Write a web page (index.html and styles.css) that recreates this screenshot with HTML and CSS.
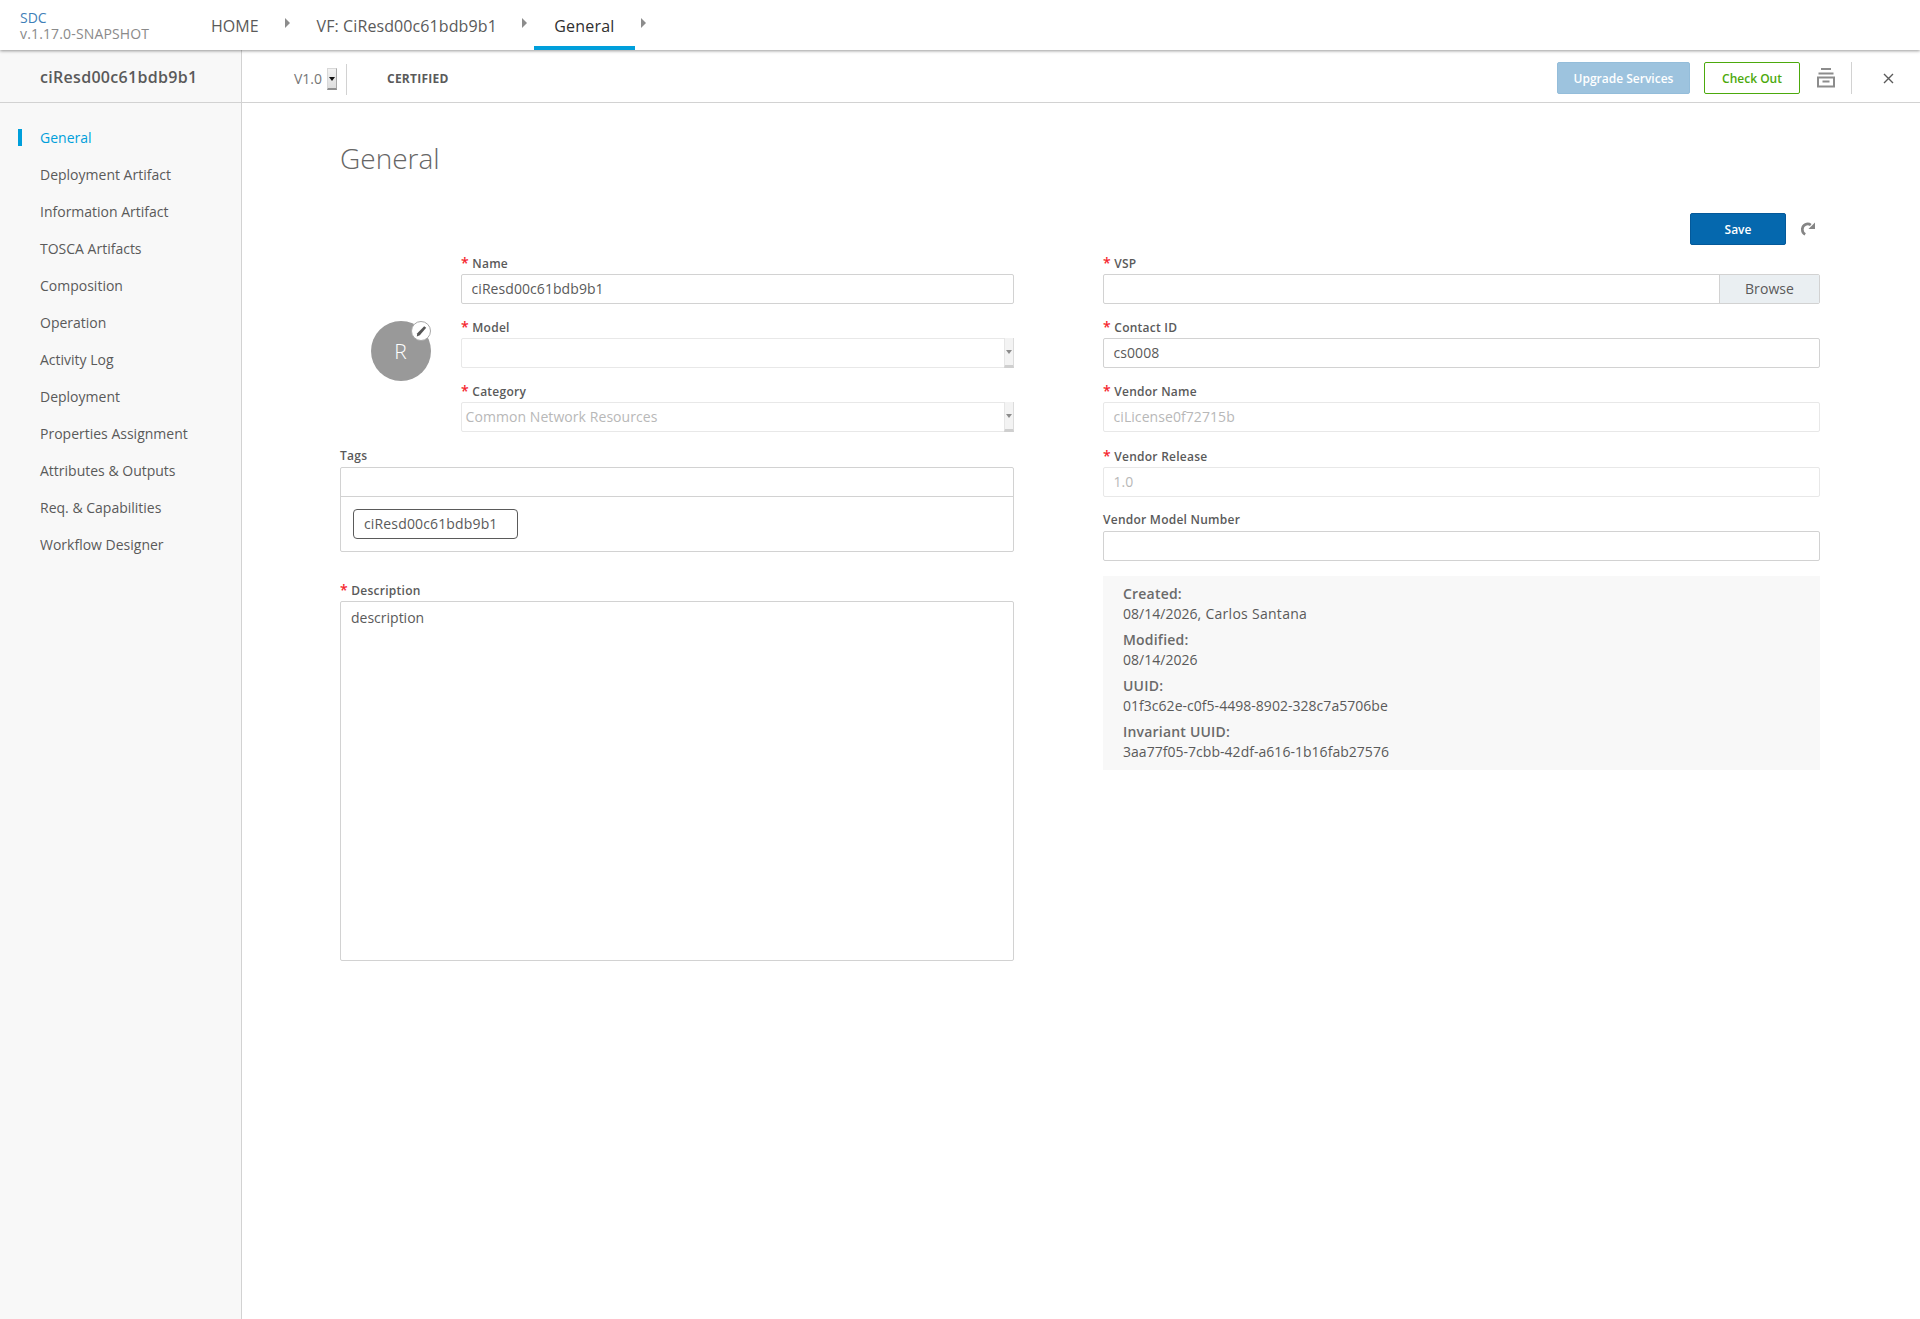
FILE: index.html
```html
<!DOCTYPE html>
<html lang="en">
<head>
<meta charset="utf-8">
<title>SDC</title>
<link rel="stylesheet" href="styles.css">
</head>
<body>
<header class="topbar">
  <div class="brand"><div class="brand-name">SDC</div><div class="brand-ver">v.1.17.0-SNAPSHOT</div></div>
  <nav class="crumbs">
    <a class="crumb crumb-home">HOME</a><span class="tri"></span>
    <a class="crumb crumb-vf">VF: CiResd00c61bdb9b1</a><span class="tri"></span>
    <a class="crumb crumb-active">General</a><span class="tri"></span>
  </nav>
</header>
<div class="shell">
  <aside class="side">
    <div class="side-title">ciResd00c61bdb9b1</div>
    <ul class="menu">
      <li class="menu-item active">General</li>
      <li class="menu-item">Deployment Artifact</li>
      <li class="menu-item">Information Artifact</li>
      <li class="menu-item">TOSCA Artifacts</li>
      <li class="menu-item">Composition</li>
      <li class="menu-item">Operation</li>
      <li class="menu-item">Activity Log</li>
      <li class="menu-item">Deployment</li>
      <li class="menu-item">Properties Assignment</li>
      <li class="menu-item">Attributes &amp; Outputs</li>
      <li class="menu-item">Req. &amp; Capabilities</li>
      <li class="menu-item">Workflow Designer</li>
    </ul>
  </aside>
  <main class="main">
    <div class="subbar">
      <div class="version"><span>V1.0</span><span class="ver-arrow"></span></div>
      <div class="state">CERTIFIED</div>
      <div class="actions">
        <button class="btn btn-upgrade">Upgrade Services</button>
        <button class="btn btn-checkout">Check Out</button>
        <svg class="ico-archive" width="18" height="20" viewBox="0 0 18 20"><path d="M4 1h10M1.500 5.500h15M1 9.500h16v9H1zM5.500 13.500h7" fill="none" stroke="#8c8c8c" stroke-width="2"/></svg>
        <span class="act-div"></span>
        <svg class="ico-close" width="11" height="11" viewBox="0 0 11 11"><path d="M1 1l9 9M10 1l-9 9" stroke="#5a5a5a" stroke-width="1.400" fill="none"/></svg>
      </div>
    </div>
    <div class="page">
      <h1 class="title">General</h1>
      <div class="save-row">
        <button class="btn btn-save">Save</button>
        <svg class="ico-redo" width="14" height="14" viewBox="0 0 15 15"><path d="M10.500 3.300A5.600 5.600 0 0 0 1.500 7.500a5.800 5.800 0 0 0 3 5.800" fill="none" stroke="#858585" stroke-width="2.800"/><path d="M15 .5v7H8z" fill="#858585"/></svg>
      </div>
      <div class="form">
        <div class="col">
          <div class="identity">
            <div class="avatar-wrap">
              <div class="avatar">R</div>
              <div class="avatar-edit"><svg width="12" height="12" viewBox="0 0 12 12"><path d="M9.200 1.200l2 1.600L4.800 10.300 1.800 11.500l.5-3.200z" fill="#555"/></svg></div>
            </div>
            <div class="identity-fields">
              <div class="field"><label class="label"><span class="req">*</span> Name</label><div class="input">ciResd00c61bdb9b1</div></div>
              <div class="field"><label class="label"><span class="req">*</span> Model</label><div class="input input-light select"><span class="sel-arrow"></span></div></div>
              <div class="field field-gap"><label class="label"><span class="req">*</span> Category</label><div class="input input-light select sel-text">Common Network Resources<span class="sel-arrow"></span></div></div>
            </div>
          </div>
          <div class="field">
            <label class="label">Tags</label>
            <div class="tags">
              <div class="tags-input"></div>
              <div class="tags-list"><span class="tag">ciResd00c61bdb9b1</span></div>
            </div>
          </div>
          <div class="field field-desc">
            <label class="label"><span class="req">*</span> Description</label>
            <div class="textarea">description</div>
          </div>
        </div>
        <div class="col">
          <div class="field"><label class="label"><span class="req">*</span> VSP</label><div class="input input-browse"><span class="browse">Browse</span></div></div>
          <div class="field"><label class="label"><span class="req">*</span> Contact ID</label><div class="input">cs0008</div></div>
          <div class="field field-gap"><label class="label"><span class="req">*</span> Vendor Name</label><div class="input input-light disabled">ciLicense0f72715b</div></div>
          <div class="field"><label class="label"><span class="req">*</span> Vendor Release</label><div class="input input-light disabled">1.0</div></div>
          <div class="field"><label class="label">Vendor Model Number</label><div class="input"></div></div>
          <div class="info">
            <div class="info-group"><div class="info-key">Created:</div><div class="info-val">08/14/2026<span class="info-author">, Carlos Santana</span></div></div>
            <div class="info-group"><div class="info-key">Modified:</div><div class="info-val">08/14/2026</div></div>
            <div class="info-group"><div class="info-key">UUID:</div><div class="info-val">01f3c62e-c0f5-4498-8902-328c7a5706be</div></div>
            <div class="info-group"><div class="info-key">Invariant UUID:</div><div class="info-val">3aa77f05-7cbb-42df-a616-1b16fab27576</div></div>
          </div>
        </div>
      </div>
    </div>
  </main>
</div>
</body>
</html>
```
FILE: styles.css
```css
* { box-sizing: border-box; }
html, body { margin: 0; padding: 0; height: 100%; }
body { font-family: "Open Sans", sans-serif; color: #5a5a5a; background: #fff; font-size: 14px; height: 1319px; overflow: hidden; display: flex; flex-direction: column; }

.topbar { height: 50px; flex: none; display: flex; background: #fff; box-shadow: 0 1px 3px rgba(0,0,0,.4); position: relative; z-index: 2; }
.brand { width: 211px; padding: 10px 0 0 20px; font-size: 14px; line-height: 15px; flex: none; }
.brand-name { color: #3f7fb8; font-size: 14px; }
.brand-ver { color: #8a8a8a; margin-top: 1px; letter-spacing: .15px; }
.crumbs { display: flex; align-items: stretch; }
.crumb { font-size: 16px; line-height: 52px; color: #5a5a5a; height: 50px; white-space: nowrap; }
.crumb-vf { letter-spacing: .1px; }
.crumb-active { color: #2f2f2f; width: 101px; text-align: center; border-bottom: 4px solid #009fdb; letter-spacing: .2px; }
.tri { width: 0; height: 0; border-left: 5px solid #8c8c8c; border-top: 5px solid transparent; border-bottom: 5px solid transparent; margin: 18px 0 0 26px; }
.crumbs .tri:nth-child(2) { margin-right: 27px; }
.crumbs .tri:nth-child(4) { margin-left: 25px; margin-right: 7px; }
.crumbs .tri:nth-child(6) { margin-left: 6px; }

.shell { flex: 1; display: flex; min-height: 0; }
.side { width: 242px; flex: none; background: #f8f8f8; border-right: 1px solid #d2d2d2; }
.side-title { height: 53px; line-height: 47px; padding: 4px 0 0 40px; font-size: 16px; font-weight: 600; letter-spacing: .3px; border-bottom: 1px solid #d2d2d2; }
.menu { list-style: none; margin: 0; padding: 16px 0 0 0; }
.menu-item { height: 37px; line-height: 37px; padding-left: 40px; font-size: 14px; color: #5a5a5a; position: relative; }
.menu-item.active { color: #009fdb; }
.menu-item.active::before { content: ""; position: absolute; left: 18px; top: 10px; width: 4px; height: 17px; background: #009fdb; }

.main { flex: 1; min-width: 0; display: flex; flex-direction: column; }
.subbar { height: 53px; flex: none; display: flex; align-items: center; border-bottom: 1px solid #d2d2d2; padding: 4px 0 0 52px; }
.version { display: flex; align-items: center; width: 53px; height: 31px; margin-top: 3px; padding-bottom: 2px; font-size: 14px; color: #767676; border-right: 1px solid #d2d2d2; gap: 5px; }
.ver-arrow { width: 10px; height: 22px; background: linear-gradient(#f2f2f2, #dedede); border: 1px solid #d8d8d8; border-right-color: #a8a8a8; border-bottom: 2px solid #8f8f8f; position: relative; }
.ver-arrow::after { content: ""; position: absolute; left: 1px; top: 8px; border-top: 4px solid #111; border-left: 3px solid transparent; border-right: 3px solid transparent; }
.state { margin-left: 40px; font-size: 12px; font-weight: 700; letter-spacing: .25px; color: #5a5a5a; }
.actions { margin-left: auto; display: flex; align-items: center; height: 32px; }
.btn { font-family: inherit; font-size: 12px; font-weight: 600; height: 32px; border-radius: 2px; padding: 0; cursor: pointer; }
.btn-upgrade { width: 133px; background: #9dc3de; border: 1px solid #94bdda; color: #fff; margin-right: 14px; }
.btn-checkout { width: 96px; background: #fff; border: 1px solid #4ca90c; color: #4ca90c; margin-right: 17px; }
.ico-archive { flex: none; margin-right: 16px; }
.act-div { width: 1px; height: 32px; background: #d2d2d2; margin-right: 31px; }
.ico-close { flex: none; margin-right: 26px; }

.page { flex: 1; padding: 0 100px 0 98px; }
.title { font-size: 28px; font-weight: 300; color: #666; margin: 0; height: 39px; line-height: 39px; margin-top: 36px; }
.save-row { display: flex; justify-content: flex-end; align-items: center; height: 32px; margin-top: 35px; padding-right: 5px; }
.btn-save { width: 96px; background: #0568ae; border: 1px solid #04599a; color: #fff; margin-right: 15px; }
.ico-redo { flex: none; }
.form { display: grid; grid-template-columns: 674px 717px; column-gap: 89px; margin-top: 9px; }
.col { min-width: 0; }
.identity { display: flex; }
.avatar-wrap { width: 121px; flex: none; position: relative; padding: 67px 0 0 31px; }
.avatar { width: 60px; height: 60px; border-radius: 50%; background: #999; color: #fff; font-size: 21px; font-weight: 300; text-align: center; line-height: 60px; padding-right: 1px; }
.avatar-edit { position: absolute; left: 71px; top: 67px; width: 20px; height: 20px; border-radius: 50%; background: #fff; border: 1px solid #a8a8a8; display: flex; align-items: center; justify-content: center; }
.identity-fields { flex: 1; min-width: 0; }
.field { margin-bottom: 14px; }
.field-gap { margin-bottom: 15px; }
.field-desc { margin-top: 29px; }
.label { display: block; height: 18px; line-height: 17px; font-size: 12px; font-weight: 600; letter-spacing: .25px; margin-bottom: 2px; color: #5a5a5a; }
.req { color: #f5262e; font-size: 14px; }
.input { height: 30px; border: 1px solid #d2d2d2; border-radius: 2px; line-height: 28px; padding: 0 9.500px; font-size: 14px; letter-spacing: .07px; color: #5a5a5a; position: relative; background: #fff; }
.input-light { border-color: #e8e8e8; }
.disabled { color: #b8b8b8; }
.select { padding: 0 3.500px; }
.sel-text { color: #b8b8b8; }
.sel-arrow { position: absolute; right: -1px; top: -1px; bottom: -1px; width: 10px; background: #f3f3f3; border-left: 1px solid #e6e6e6; border-right: 1px solid #dcdcdc; border-bottom: 3px solid #cfcfcf; }
.sel-arrow::after { content: ""; position: absolute; left: 1px; top: 12px; border-top: 4px solid #8c8c8c; border-left: 3px solid transparent; border-right: 3px solid transparent; }
.input-browse { padding: 0; }
.browse { position: absolute; right: 0; top: 0; bottom: 0; width: 100px; text-align: center; background: #eaeff2; border-left: 1px solid #d2d2d2; color: #5a5a5a; }
.tags { border: 1px solid #d2d2d2; border-radius: 2px; height: 85px; }
.tags-input { height: 29px; border-bottom: 1px solid #d2d2d2; }
.tags-list { padding: 12px; }
.tag { display: block; width: 165px; height: 30px; line-height: 28px; border: 1px solid #5a5a5a; border-radius: 4px; padding-left: 10px; font-size: 14px; letter-spacing: .15px; }
.textarea { height: 360px; border: 1px solid #d2d2d2; border-radius: 2px; padding: 6px 10px; line-height: 20px; font-size: 14px; }
.info { background: #f8f8f8; height: 194px; margin-top: 15px; padding: 8px 20px; }
.info-group { height: 46px; line-height: 20px; }
.info-key { font-weight: 600; letter-spacing: .2px; color: #6a6a6a; }
.info-val { color: #5a5a5a; letter-spacing: .03px; }
.info-author { letter-spacing: .28px; }
```
